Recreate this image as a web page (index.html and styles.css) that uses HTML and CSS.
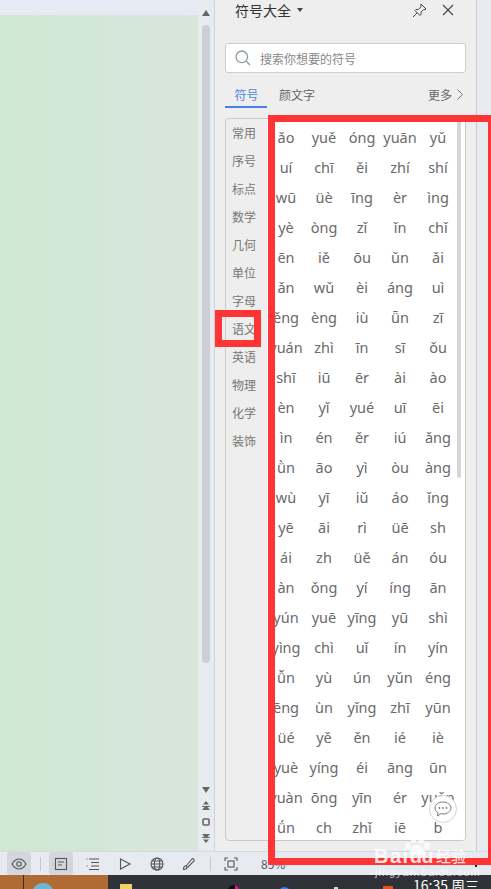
FILE: index.html
```html
<!DOCTYPE html>
<html lang="zh">
<head>
<meta charset="utf-8">
<title>符号大全</title>
<link rel="stylesheet" href="styles.css">
</head>
<body>
<div class="app">
  <main class="main">
    <div class="doc"><div class="page"></div></div>
    <div class="vscroll">
      <svg class="arrow-up" width="8" height="6" viewBox="0 0 8 6"><path d="M4 0l4 6H0z"/></svg>
      <div class="vthumb"></div>
      <div class="vbtns">
        <svg width="8" height="6" viewBox="0 0 8 6"><path d="M4 6l4-6H0z"/></svg>
        <svg width="8" height="9" viewBox="0 0 8 9"><path d="M4 0l3 3.500H1zM0 5h8v1H0zM4 4.500l4 4.500H0z"/></svg>
        <svg width="8" height="8" viewBox="0 0 8 8"><rect x="1" y="1" width="6" height="6" rx="1" fill="none" stroke="#666" stroke-width="1.600"/></svg>
        <svg width="8" height="9" viewBox="0 0 8 9"><path d="M0 0h8l-4 4.500zM0 3h8v1H0zM1 5.500h6L4 9z"/></svg>
      </div>
    </div>
    <section class="panel">
      <header class="panel-head">
        <span class="panel-title">符号大全</span>
        <svg class="caret" width="6" height="4" viewBox="0 0 6 4"><path d="M0 0h6L3 4z"/></svg>
        <span class="spacer"></span>
        <svg class="pin" width="15" height="15" viewBox="0 0 15 15"><path d="M9 1l5 5-1 .6-1.400 0-2.600 2.600 0 2.300-1 1-5-5 1-1 2.300 0 2.600-2.600 0-1.400zM5 10l-4 4"/></svg>
        <svg class="close" width="12" height="12" viewBox="0 0 12 12"><path d="M1 1l10 10M11 1L1 11"/></svg>
      </header>
      <div class="search">
        <svg width="16" height="16" viewBox="0 0 16 16"><circle cx="6.800" cy="6.800" r="5.800"/><path d="M11 11l4 4"/></svg>
        <span>搜索你想要的符号</span>
      </div>
      <nav class="tabs">
        <span class="tab active">符号</span>
        <span class="tab">颜文字</span>
        <span class="spacer"></span>
        <span class="more">更多</span>
        <svg class="chev" width="6" height="11" viewBox="0 0 6 11"><path d="M.5.5l5 5-5 5"/></svg>
      </nav>
      <div class="box">
        <ul class="cats">
          <li>常用</li><li>序号</li><li>标点</li><li>数学</li><li>几何</li><li>单位</li>
          <li>字母</li><li>语文</li><li>英语</li><li>物理</li><li>化学</li><li>装饰</li>
        </ul>
        <div class="grid">
          <span>ǎo</span><span>yuě</span><span>óng</span><span>yuān</span><span>yǔ</span>
          <span>uí</span><span>chī</span><span>ěi</span><span>zhí</span><span>shí</span>
          <span>wū</span><span>üè</span><span>īng</span><span>èr</span><span>ìng</span>
          <span>yè</span><span>òng</span><span>zǐ</span><span>ǐn</span><span>chǐ</span>
          <span>ēn</span><span>iě</span><span>ōu</span><span>ǔn</span><span>ǎi</span>
          <span>ǎn</span><span>wǔ</span><span>èi</span><span>áng</span><span>uì</span>
          <span>ěng</span><span>èng</span><span>iù</span><span>ǖn</span><span>zī</span>
          <span>yuán</span><span>zhì</span><span>īn</span><span>sī</span><span>ǒu</span>
          <span>shī</span><span>iū</span><span>ēr</span><span>ài</span><span>ào</span>
          <span>èn</span><span>yǐ</span><span>yué</span><span>uī</span><span>ēi</span>
          <span>ìn</span><span>én</span><span>ěr</span><span>iú</span><span>ǎng</span>
          <span>ǜn</span><span>āo</span><span>yì</span><span>òu</span><span>àng</span>
          <span>wù</span><span>yī</span><span>iǔ</span><span>áo</span><span>ǐng</span>
          <span>yē</span><span>āi</span><span>rì</span><span>üē</span><span>sh</span>
          <span>ái</span><span>zh</span><span>üě</span><span>án</span><span>óu</span>
          <span>àn</span><span>ǒng</span><span>yí</span><span>íng</span><span>ān</span>
          <span>yún</span><span>yuē</span><span>yīng</span><span>yū</span><span>shì</span>
          <span>yìng</span><span>chì</span><span>uǐ</span><span>ín</span><span>yín</span>
          <span>ǚn</span><span>yù</span><span>ún</span><span>yǔn</span><span>éng</span>
          <span>ēng</span><span>ùn</span><span>yǐng</span><span>zhī</span><span>yūn</span>
          <span>üé</span><span>yě</span><span>ěn</span><span>ié</span><span>iè</span>
          <span>yuè</span><span>yíng</span><span>éi</span><span>āng</span><span>ūn</span>
          <span>yuàn</span><span>ōng</span><span>yīn</span><span>ér</span><span>yuǎn</span>
          <span>ǘn</span><span>ch</span><span>zhǐ</span><span>iē</span><span>b</span>
        </div>
        <div class="gridbar"><div class="gridthumb"></div></div>
      </div>
    </section>
    <div class="strip"></div>
  </main>
  <footer class="status">
    <span class="sbtn on"><svg width="16" height="16" viewBox="0 0 16 16"><path d="M1 8c2-3.500 4.300-5 7-5s5 1.500 7 5c-2 3.500-4.300 5-7 5s-5-1.500-7-5z"/><circle cx="8" cy="8" r="2.200"/></svg></span>
    <i class="sep sep1"></i>
    <span class="sbtn on"><svg width="14" height="14" viewBox="0 0 14 14"><rect x="1.500" y="1.500" width="11" height="11"/><path d="M4 5h6M4 8h4"/></svg></span>
    <span class="sbtn"><svg width="14" height="14" viewBox="0 0 14 14"><path d="M3 2h10M5 5.500h8M5 9h8M3 12.500h10M.5 2h1M.5 9h1"/></svg></span>
    <span class="sbtn"><svg width="14" height="14" viewBox="0 0 14 14"><path d="M2.500 2l9.500 5-9.500 5z"/></svg></span>
    <span class="sbtn"><svg width="14" height="14" viewBox="0 0 14 14"><circle cx="7" cy="7" r="6"/><ellipse cx="7" cy="7" rx="2.700" ry="6"/><path d="M1 7h12M2 4h10M2 10h10"/></svg></span>
    <span class="sbtn"><svg width="14" height="14" viewBox="0 0 14 14"><path d="M1.500 12.500c0-2 .5-3.500 2-3.500s2 1.500 1 2.500-2 1-3 1zM4 9l6-7c1-1 3 .5 2 2l-6.500 6.500"/></svg></span>
    <i class="sep sep2"></i>
    <span class="sbtn"><svg width="14" height="14" viewBox="0 0 14 14"><path d="M1 4V1h3M10 1h3v3M13 10v3h-3M4 13H1v-3"/><rect x="4" y="4" width="6" height="6"/></svg></span>
    <span class="zoom">85%</span>
    <i class="status-dot"></i>
  </footer>
  <div class="taskbar">
    <div class="tb-brown">
      <i class="tb-line"></i>
      <i class="tb-globe"></i>
    </div>
    <div class="tb-dark">
      <i class="tb-folder"></i>
      <i class="tb-ic1"></i>
      <i class="tb-ic2"></i>
      <i class="tb-ic3"></i>
      <i class="tb-ic4"></i>
      <span class="clock">16:35 周三</span>
    </div>
  </div>
</div>
<div class="mark mark-big"></div>
<div class="mark mark-cat"></div>
<div class="chat">
  <svg width="18" height="16" viewBox="0 0 18 16"><path d="M9 1c4.400 0 8 2.700 8 6s-3.600 6-8 6c-.8 0-1.500-.1-2.200-.3L3.500 15l.4-3.400C2 10.500 1 8.900 1 7c0-3.300 3.600-6 8-6z"/><circle cx="5.500" cy="7" r=".9" class="dot"/><circle cx="9" cy="7" r=".9" class="dot"/><circle cx="12.500" cy="7" r=".9" class="dot"/></svg>
</div>
<div class="wm">
  <svg class="wm-paw" width="25" height="26" viewBox="0 0 25 26"><ellipse cx="3" cy="11" rx="2.800" ry="3.600"/><ellipse cx="8.500" cy="4" rx="3" ry="4"/><ellipse cx="16.500" cy="4" rx="3" ry="4"/><ellipse cx="22" cy="11" rx="2.800" ry="3.600"/><path d="M12.500 10c3 0 4 2 6 4s2 6-1 6-3-1-5-1-3 1-5 1-4-3-2-6 4-4 7-4z"/></svg>
  <div class="wm-main"><span class="wm-bai">Bai</span><span class="wm-du">du</span><span class="wm-jy">经验</span></div>
  <div class="wm-url">jingyan.baidu.com</div>
</div>
</body>
</html>
```
FILE: styles.css
```css
* { box-sizing: border-box; margin: 0; padding: 0; }
html, body { width: 491px; height: 889px; overflow: hidden; }
body { position: relative; font-family: "Noto Sans CJK SC", "Noto Sans", sans-serif; background: #e8ebf0; }
.app { display: flex; flex-direction: column; height: 889px; }
.main { display: flex; height: 851px; flex: none; }
.spacer { flex: 1; }

.doc { width: 198px; flex: none; padding-top: 15px; background: #e6eaf2; }
.page { height: 100%; background: linear-gradient(90deg, #cfe8d2, #d8e6dc); }

.vscroll { width: 17px; flex: none; background: #e8ebf0; display: flex; flex-direction: column; align-items: center; padding-right: 1px; border-right: 1px solid #cfd2d6; }
.vscroll svg { fill: #666; display: block; }
.arrow-up { margin-top: 10px; }
.vthumb { width: 8px; height: 638px; margin-top: 9px; border-radius: 4px; background: #cbced2; }
.vbtns { display: flex; flex-direction: column; align-items: center; margin-top: 124px; gap: 8px; }

.panel { width: 262px; flex: none; background: #eeeeee; border-right: 1px solid #c8cacc; padding: 0 10px; display: flex; flex-direction: column; }
.panel-head { height: 20px; display: flex; align-items: center; padding-left: 10px; color: #333; }
.panel-title { font-size: 14px; line-height: 20px; }
.caret { margin-left: 6px; fill: #444; }
.pin { fill: none; stroke: #444; stroke-width: 1; margin-right: 12px; }
.close { fill: none; stroke: #444; stroke-width: 1.100; margin-right: 12px; margin-left: 3px; }

.search { height: 30px; width: 241px; margin-top: 23px; background: #fff; border: 1px solid #cdcdcd; border-radius: 3px; display: flex; align-items: center; padding-left: 9px; gap: 9px; font-size: 12px; color: #888; }
.search svg { fill: none; stroke: #8e99a6; stroke-width: 1.300; }

.tabs { display: flex; align-items: center; height: 35px; width: 241px; font-size: 12px; color: #666; }
.tab { width: 42px; height: 35px; line-height: 44px; text-align: center; }
.tab + .tab { width: auto; margin-left: 12px; }
.tab.active { color: #5585e0; border-bottom: 2px solid #4a80e6; padding-left: 1px; }
.more { margin-right: 5px; }
.chev { fill: none; stroke: #777; stroke-width: 1; margin-right: 3px; }
.tabs .more, .tabs .chev { position: relative; top: 4px; }

.box { width: 241px; height: 723px; margin-top: 10px; border: 1px solid #c9c9c9; border-radius: 4px; display: flex; overflow: hidden; background: #eee; }
.cats { width: 41px; flex: none; list-style: none; padding-left: 6px; font-size: 12px; color: #777; }
.cats li { height: 28px; line-height: 28px; }
.grid { width: 190px; flex: none; background: #fff; display: grid; grid-template-columns: repeat(5, 38px); grid-auto-rows: 30px; padding-top: 3px; font-family: "Noto Sans", sans-serif; font-size: 14.500px; color: #6a6a6a; align-content: start; overflow: hidden; }
.grid span { display: block; text-align: center; line-height: 30px; white-space: nowrap; }
.gridbar { flex: 1; background: #fff; }
.gridthumb { width: 4px; height: 359px; background: #d6d6d6; border-radius: 0 0 2px 2px; }

.strip { flex: 1; background: #e8ebf0; }

.status { height: 24px; flex: none; display: flex; align-items: center; background: #e7eaf0; padding-left: 7px; border-top: 1px solid #d5d8dc; position: relative; }
.sbtn { width: 24px; height: 23px; flex: none; display: flex; align-items: center; justify-content: center; border-radius: 3px; margin-right: 8px; }
.sbtn.on { background: #d3d6da; }
.sbtn svg { fill: none; stroke: #555; stroke-width: 1.100; }
.sep { width: 1px; height: 14px; background: #c6c9cd; flex: none; margin: 0 8px 0 1px; }
.zoom { font-size: 12px; color: #4a5a6a; margin-left: 10px; }
.status-dot { position: absolute; left: 475px; top: 10px; width: 2px; height: 5px; background: #222; }

.taskbar { height: 14px; flex: none; display: flex; overflow: hidden; position: relative; }
.tb-brown { width: 108px; background: #b06a33; position: relative; flex: none; }
.tb-line { position: absolute; left: 23px; top: 0; bottom: 0; width: 1px; background: #3a2a20; }
.tb-globe { position: absolute; left: 32px; top: 8px; width: 22px; height: 22px; border-radius: 50%; background: #6fb5d6; }
.tb-dark { flex: 1; background: #2f3338; position: relative; }
.tb-folder { position: absolute; left: 12px; top: 9px; width: 12px; height: 10px; background: #f4cf6a; }
.tb-ic1 { position: absolute; left: 120px; top: 10px; width: 11px; height: 11px; border-radius: 50%; background: linear-gradient(90deg, #111 60%, #e0109a 60%); }
.tb-ic2 { position: absolute; left: 171px; top: 12px; width: 11px; height: 11px; border-radius: 50%; background: #3d7ff0; }
.tb-ic3 { position: absolute; left: 226px; top: 12px; width: 4px; height: 4px; background: #d8d8d8; }
.tb-ic4 { position: absolute; left: 275px; top: 11px; width: 10px; height: 8px; background: #e8501f; }
.clock { position: absolute; left: 305px; top: 3px; font-size: 14px; line-height: 14px; color: #fff; white-space: nowrap; }

.mark { position: absolute; border-style: solid; border-color: #ff3535; pointer-events: none; }
.mark-big { left: 268px; top: 115px; width: 227px; height: 750px; border-width: 7px; }
.mark-cat { left: 215px; top: 310px; width: 46px; height: 37px; border-width: 7px; }

.chat { position: absolute; left: 429px; top: 795px; width: 28px; height: 28px; border-radius: 50%; background: #fff; border: 1px solid #d4d4d4; display: flex; align-items: center; justify-content: center; }
.chat svg { fill: none; stroke: #777; stroke-width: 1; }
.chat .dot { fill: #777; stroke: none; }

.wm { position: absolute; left: 374px; top: 835px; width: 115px; height: 43px; color: rgba(255, 255, 255, .85); pointer-events: none; }
.wm-paw { position: absolute; left: 31px; top: 0; fill: rgba(255, 255, 255, .75); }
.wm-main { position: absolute; left: 0; top: 12px; display: flex; align-items: center; font-family: "Liberation Sans", sans-serif; font-weight: 700; font-size: 20px; line-height: 18px; white-space: nowrap; }
.wm-bai { letter-spacing: 1.500px; }
.wm-du { letter-spacing: -.5px; }
.wm-jy { font-family: "Noto Sans CJK SC", sans-serif; font-size: 15px; font-weight: 500; margin-left: 3px; }
.wm-url { position: absolute; left: 1px; top: 32px; font-family: "Liberation Sans", sans-serif; font-size: 11px; letter-spacing: 1px; line-height: 11px; white-space: nowrap; color: rgba(255,255,255,.7); }
```
